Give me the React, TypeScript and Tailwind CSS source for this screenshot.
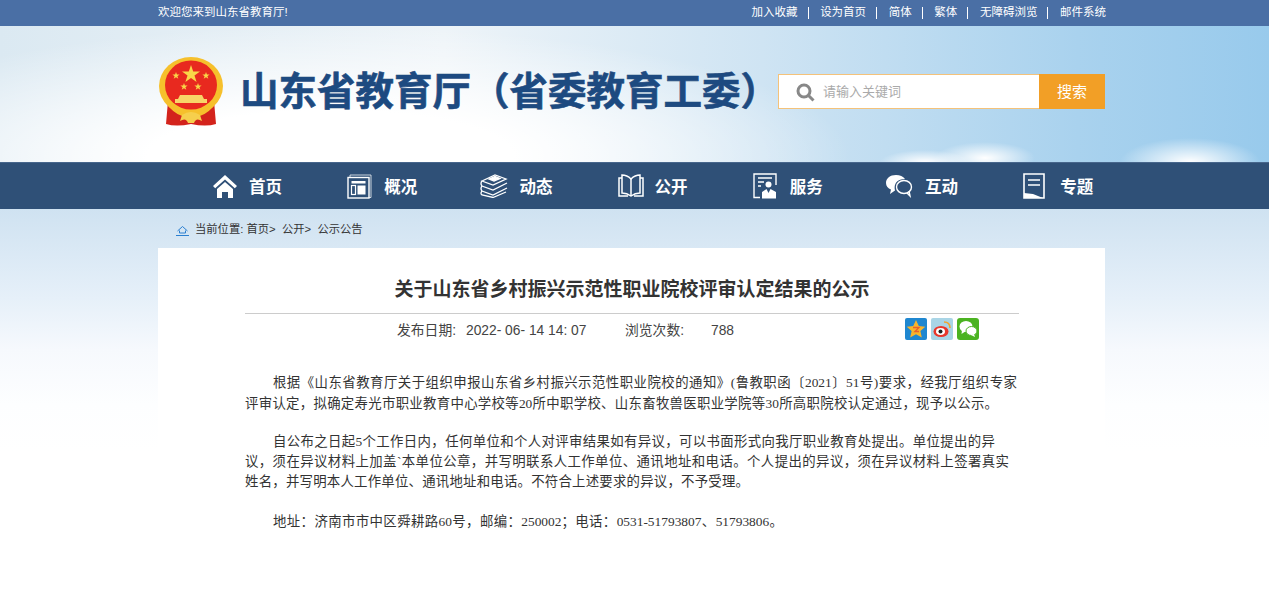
import React from "react";

const topLinks = ["加入收藏", "设为首页", "简体", "繁体", "无障碍浏览", "邮件系统"];

const Seal = () => (
  <svg width="66" height="70" viewBox="0 0 66 70" className="shrink-0">
    <path d="M10 44 L8 67 Q18 70 33 67 Q48 70 58 67 L56 44 Z" fill="#d3231c" />
    <ellipse cx="33" cy="29" rx="32" ry="29" fill="#f6c02c" />
    <ellipse cx="33" cy="28" rx="26" ry="24.500" fill="#e8291f" />
    <path d="M33 8 l2.200 6.500 h6.800 l-5.500 4 2.100 6.500 -5.600 -4 -5.600 4 2.100 -6.500 -5.500 -4 h6.800 z" fill="#f9d648" />
    <path d="M18 15 l.9 2.600 h2.700 l-2.200 1.600 .9 2.600 -2.300 -1.600 -2.300 1.600 .9 -2.600 -2.200 -1.600 h2.700 z" fill="#f9d648" />
    <path d="M48 15 l.9 2.600 h2.700 l-2.200 1.600 .9 2.600 -2.300 -1.600 -2.300 1.600 .9 -2.600 -2.200 -1.600 h2.700 z" fill="#f9d648" />
    <path d="M26 26 l.9 2.600 h2.700 l-2.200 1.600 .9 2.600 -2.300 -1.600 -2.300 1.600 .9 -2.600 -2.200 -1.600 h2.700 z" fill="#f9d648" />
    <path d="M40 26 l.9 2.600 h2.700 l-2.200 1.600 .9 2.600 -2.300 -1.600 -2.300 1.600 .9 -2.600 -2.200 -1.600 h2.700 z" fill="#f9d648" />
    <path d="M22 38 h22 l2 4 h3 v4 h-32 v-4 h3 z" fill="#f8d568" />
    <path d="M12 44 Q22 56 33 54 Q44 56 54 44 L55 50 Q44 62 33 59 Q22 62 11 50 Z" fill="#f6c02c" />
    <path d="M24 58 Q33 52 42 58 L44 64 Q38 60 36 66 H30 Q28 60 22 64 Z" fill="#f6cf4d" />
  </svg>
);

const HomeIcon = () => (
  <svg width="26" height="26" viewBox="0 0 26 26" fill="#fff">
    <path d="M13 2 L1 13 l2.2 2.2 L13 6.5 l9.8 8.7 L25 13 Z" />
    <path d="M5 16 L13 9 l8 7 v9 h-5 v-6 h-6 v6 H5 Z" />
  </svg>
);

const WindowIcon = () => (
  <svg width="25" height="25" viewBox="0 0 25 25" fill="none" stroke="#fff">
    <path d="M1 3.5 h2 V1 h21 v22.5 h-2" strokeOpacity="0.75" />
    <rect x="1" y="3.5" width="21" height="20.5" strokeWidth="1.4" />
    <rect x="4.5" y="7" width="14" height="2.5" fill="#fff" stroke="none" />
    <rect x="4.5" y="11.5" width="4" height="9" strokeWidth="1.2" />
    <rect x="10.5" y="11.5" width="8" height="9" fill="#fff" stroke="none" />
  </svg>
);

const BooksIcon = () => (
  <svg width="28" height="24" viewBox="0 0 28 24" fill="none" stroke="#fff" strokeWidth="1.3" className="-ml-[2px]">
    <path d="M2 7 L15 1 L26 5 L13 11 Z" />
    <path d="M9 5 L15 2.5 L20 4.5 L14 7 Z" fill="#fff" />
    <path d="M2 7 Q0 9.5 2 12 L13 16 L27 9" />
    <path d="M2 12 Q0 14.5 2 17 L13 21 L27 14" />
    <path d="M2 17 Q0 19.5 2 21 L13 23.5 L26 18" />
  </svg>
);

const BookIcon = () => (
  <svg width="26" height="24" viewBox="0 0 26 24" fill="none" stroke="#fff" strokeWidth="1.5">
    <path d="M13 5 Q9 1 4 1 V19 Q9 19 13 22 Q17 19 22 19 V1 Q17 1 13 5 Z" />
    <path d="M13 5 V22" />
    <path d="M4 4 H1 V22 H10 M22 4 H25 V22 H16" />
  </svg>
);

const ServiceIcon = () => (
  <svg width="24" height="26" viewBox="0 0 24 26" fill="none" stroke="#fff" strokeWidth="1.4">
    <path d="M7 24.5 H1 V1 H23 V12" />
    <path d="M5 5 H19 M5 9 H11 M5 13 H8" />
    <circle cx="15.5" cy="11.5" r="3" fill="#fff" stroke="none" />
    <path d="M9 25.5 V19 L13.5 16 L15.5 20 L17.5 16 L23 19 V25.5 Z" fill="#fff" stroke="none" />
  </svg>
);

const ChatIcon = () => (
  <svg width="28" height="24" viewBox="0 0 28 24" fill="none" className="-ml-[3px]">
    <path d="M11 1 C5 1 1 4.500 1 9 C1 12 3 14.500 6 15.500 L5 20 L10 16.500 C9 12 10 7 16 5.500 L20 5 C18 2.500 15 1 11 1 Z" fill="#fff" />
    <ellipse cx="19" cy="13" rx="7.500" ry="6.500" stroke="#fff" strokeWidth="1.400" />
    <path d="M22 19 L25 22 L24 17" stroke="#fff" strokeWidth="1.400" />
  </svg>
);

const TopicIcon = () => (
  <svg width="22" height="26" viewBox="0 0 22 26" fill="none" stroke="#fff" strokeWidth="1.6">
    <path d="M1 1 H21 V25 H1 Z" />
    <path d="M5 7 H17 M5 12 H17" />
    <path d="M1 20 L10 21 L20 25 H1 Z" fill="#fff" stroke="none" />
  </svg>
);

const navItems = [
  { label: "首页", icon: <HomeIcon /> },
  { label: "概况", icon: <WindowIcon /> },
  { label: "动态", icon: <BooksIcon /> },
  { label: "公开", icon: <BookIcon /> },
  { label: "服务", icon: <ServiceIcon /> },
  { label: "互动", icon: <ChatIcon /> },
  { label: "专题", icon: <TopicIcon /> },
];

const QzoneIcon = () => (
  <svg width="22" height="22" viewBox="0 0 22 22">
    <rect width="22" height="22" rx="2" fill="#1f87d0" />
    <path d="M11 2 l2.800 6 6.500 .7 -4.900 4.300 1.400 6.500 -5.800 -3.300 -5.800 3.300 1.400 -6.500 -4.900 -4.300 6.500 -.7 z" fill="#f7b52c" />
    <path d="M8 9.500 h6 l-4 4 h4" fill="none" stroke="#e8612c" strokeWidth="1.400" />
  </svg>
);

const WeiboIcon = () => (
  <svg width="22" height="22" viewBox="0 0 22 22">
    <rect width="22" height="22" rx="2" fill="#a9d5e6" />
    <ellipse cx="10" cy="13.500" rx="7.500" ry="5.500" fill="#e8372c" />
    <ellipse cx="9.500" cy="13.500" rx="4.500" ry="3.400" fill="#fff" />
    <circle cx="9.500" cy="13.500" r="2" fill="#222" />
    <path d="M13 4 Q19 4 19 10" fill="none" stroke="#f2a52c" strokeWidth="1.600" />
  </svg>
);

const WechatIcon = () => (
  <svg width="22" height="22" viewBox="0 0 22 22">
    <rect width="22" height="22" rx="3" fill="#4bb321" />
    <ellipse cx="9" cy="8.500" rx="6.500" ry="5.500" fill="#fff" />
    <path d="M5 12 L4.500 16 L9 13 Z" fill="#fff" />
    <ellipse cx="14.500" cy="13" rx="5.500" ry="4.500" fill="#fff" stroke="#4bb321" />
    <path d="M17 16 L18 19 L14 17 Z" fill="#fff" />
  </svg>
);

const Line = ({ className, children }: { className: string; children: React.ReactNode }) => (
  <div className={`whitespace-nowrap [text-align-last:justify] h-[20px] ${className}`}>{children}</div>
);

export default function App() {
  return (
    <div className="relative h-[600px] overflow-hidden bg-white font-['Liberation_Sans','Noto_Sans_CJK_SC',sans-serif] text-[#333]">
      {/* top bar */}
      <div className="h-[26px] bg-[#4a6fa5] text-white text-[11.500px]">
        <div className="ml-[158px] w-[948px] h-full flex items-center justify-between">
          <span>欢迎您来到山东省教育厅!</span>
          <div className="flex items-center">
            {topLinks.map((t, i) => (
              <React.Fragment key={t}>
                {i > 0 && <span className="ml-[10px] mr-[11.600px] w-px h-[12px] bg-white" />}
                <span>{t}</span>
              </React.Fragment>
            ))}
          </div>
        </div>
      </div>

      {/* header with sky */}
      <div className="h-[136px] bg-[radial-gradient(ellipse_45px_12px_at_925px_136px,#ffffff_0%,rgba(255,255,255,0)_100%),radial-gradient(ellipse_50px_16px_at_985px_132px,#ffffff_0%,rgba(255,255,255,0)_100%),radial-gradient(ellipse_70px_24px_at_1190px_136px,#ffffff_0%,rgba(255,255,255,0)_100%),radial-gradient(ellipse_520px_130px_at_330px_130px,#ffffff_35%,rgba(255,255,255,0)_100%),linear-gradient(90deg,#dbe9f2_0%,#eef4f8_35%,#cfe4f3_60%,#a9d2ee_85%,#98caec_100%)]">
        <div className="ml-[158px] w-[947px] h-full flex items-center pb-[5px]">
          <Seal />
          <h1 className="ml-[16px] -mt-[6px] w-[538px] text-[38.500px] font-bold leading-none whitespace-nowrap text-[#1d4a80] [-webkit-text-stroke:0.6px_#1d4a80] font-['Noto_Sans_CJK_SC',sans-serif]">
            山东省教育厅（省委教育工委）
          </h1>
          <div className="flex h-[35px] w-[327px] border border-[#f4c27a] bg-white">
            <div className="flex flex-1 items-center pl-[17px] pt-px text-[13px] text-[#aaa]">
              <svg width="19" height="19" viewBox="0 0 19 19" fill="none" stroke="#888" className="mr-[8px]">
                <circle cx="8" cy="8" r="6" strokeWidth="3" />
                <path d="M12.500 12.500 L17.500 17.500" strokeWidth="3" />
              </svg>
              请输入关键词
            </div>
            <div className="w-[66px] -my-px -mr-px pt-px flex items-center justify-center bg-[#f29f26] text-white text-[15px]">
              搜索
            </div>
          </div>
        </div>
      </div>

      {/* nav */}
      <nav className="h-[47px] bg-[#2f5077] border-t border-[#47668c]">
        <div className="ml-[212px] flex h-full items-center">
          {navItems.map((item) => (
            <div key={item.label} className="flex w-[135.200px] items-center">
              <div className="flex w-[37px] items-center">{item.icon}</div>
              <span className="text-[16.500px] font-bold text-white font-['Noto_Sans_CJK_SC',sans-serif]">{item.label}</span>
            </div>
          ))}
        </div>
      </nav>

      {/* body on pale blue fade */}
      <div className="h-[391px] bg-[linear-gradient(180deg,#cfe2f1_0%,#e6f0f9_23%,#f6f9fd_36%,#fdfeff_50%,#ffffff_62%)]">
        <div className="ml-[158px] w-[947px] h-full flex flex-col">
          <div className="h-[39px] flex items-center pl-[18px] pt-[2px] text-[11.300px] text-[#333]">
            <svg width="13" height="11" viewBox="0 0 13 11" fill="none" stroke="#2b7fd0" className="mr-[6px] mt-[2px]">
              <path d="M1.500 6 L6.500 1.500 L11.500 6 M3.500 5.500 V8 H9.500 V5.500" />
              <path d="M0 10.500 H13" />
            </svg>
            当前位置: 首页&gt;&nbsp; 公开&gt;&nbsp; 公示公告
          </div>

          <div className="flex-1 bg-white pl-[87px] pr-[86px]">
            <h2 className="h-[66px] pt-[16px] flex items-center justify-center border-b border-[#ccc] text-[19px] font-bold text-[#333] font-['Noto_Sans_CJK_SC',sans-serif]">
              关于山东省乡村振兴示范性职业院校评审认定结果的公示
            </h2>

            <div className="relative h-[35px] flex items-center pl-[152px] text-[13.800px] text-[#444]">
              <span className="w-[69px]">发布日期:</span>
              <span className="w-[159px]">2022- 06- 14 14: 07</span>
              <span className="w-[86px]">浏览次数:</span>
              <span>788</span>
              <div className="absolute right-[40px] top-[4px] flex gap-[4px]">
                <QzoneIcon />
                <WeiboIcon />
                <WechatIcon />
              </div>
            </div>

            <div className="mt-[24px] text-[13.400px] leading-[20px] text-[#333] font-['Liberation_Serif','Noto_Sans_CJK_SC',sans-serif]">
              <Line className="ml-[28px] w-[744px]">根据《山东省教育厅关于组织申报山东省乡村振兴示范性职业院校的通知》(鲁教职函〔2021〕51号)要求，经我厅组织专家</Line>
              <Line className="w-[753px] mt-px">评审认定，拟确定寿光市职业教育中心学校等20所中职学校、山东畜牧兽医职业学院等30所高职院校认定通过，现予以公示。</Line>
              <Line className="ml-[28px] w-[722px] mt-[18px]">自公布之日起5个工作日内，任何单位和个人对评审结果如有异议，可以书面形式向我厅职业教育处提出。单位提出的异</Line>
              <Line className="w-[764px]">议，须在异议材料上加盖`本单位公章，并写明联系人工作单位、通讯地址和电话。个人提出的异议，须在异议材料上签署真实</Line>
              <Line className="w-[504px]">姓名，并写明本人工作单位、通讯地址和电话。不符合上述要求的异议，不予受理。</Line>
              <Line className="ml-[28px] w-[510px] mt-[20px]">地址：济南市市中区舜耕路60号，邮编：250002；电话：0531-51793807、51793806。</Line>
            </div>
          </div>
        </div>
      </div>
    </div>
  );
}
